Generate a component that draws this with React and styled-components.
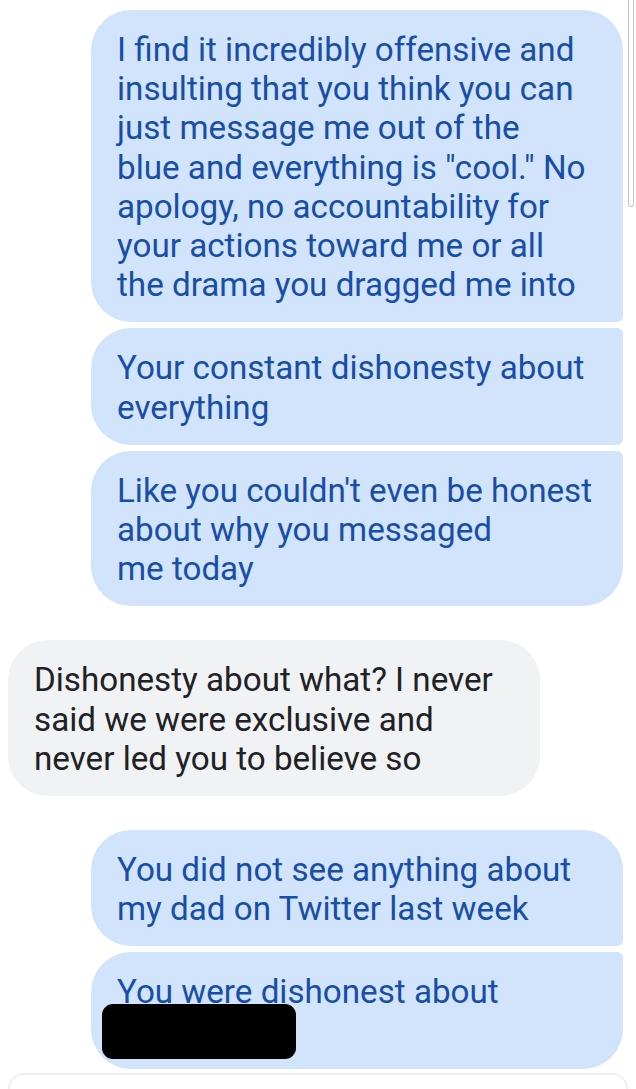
import styled, { createGlobalStyle } from "styled-components";

const GlobalStyle = createGlobalStyle`
  html, body {
    margin: 0;
    padding: 0;
    background: #ffffff;
  }
  body {
    font-family: Roboto, "Noto Sans", "Liberation Sans", sans-serif;
    -webkit-font-smoothing: antialiased;
  }
`;

const Thread = styled.div`
  position: relative;
  display: flex;
  flex-direction: column;
  padding: 10px 13px 0 8px;
  height: 1089px;
  overflow: hidden;
  box-sizing: border-box;
`;

const Group = styled.div`
  display: flex;
  flex-direction: column;
  align-items: ${(p) => (p.$mine ? "flex-end" : "flex-start")};
  gap: 6px;
  margin-bottom: 34px;
`;

const Bubble = styled.div`
  box-sizing: border-box;
  width: 532px;
  padding: 20px 16px 18px 26px;
  font-size: 33.2px;
  line-height: 39.2px;
  color: ${(p) => (p.$mine ? "#174ea6" : "#202124")};
  background: ${(p) => (p.$mine ? "#d2e3fc" : "#f0f2f3")};
  border-radius: ${(p) => p.$radius};
`;

const Line = styled.div`
  white-space: nowrap;
`;

const Redaction = styled.div`
  width: 194px;
  height: 55px;
  margin: -8px 0 -8px -15px;
  background: #000;
  border-radius: 11px;
`;

const Composer = styled.div`
  margin: -30px -5px 0 0;
  height: 60px;
  border: 2px solid #eef0f1;
  border-bottom: none;
  border-radius: 44px 44px 0 0;
  background: #fff;
`;

const ScrollThumb = styled.div`
  position: absolute;
  top: -10px;
  right: 2px;
  width: 4px;
  height: 216px;
  border: 1px solid #c4c4c4;
  border-top: none;
  border-radius: 0 0 4px 4px;
`;

const R = "40px";
const S = "6px";

const messages = [
  {
    mine: true,
    items: [
      {
        radius: `${R} ${R} ${S} ${R}`,
        lines: [
          "I find it incredibly offensive and",
          "insulting that you think you can",
          "just message me out of the",
          'blue and everything is "cool." No',
          "apology, no accountability for",
          "your actions toward me or all",
          "the drama you dragged me into",
        ],
      },
      {
        radius: `${R} ${S} ${S} ${R}`,
        lines: ["Your constant dishonesty about", "everything"],
      },
      {
        radius: `${R} ${S} ${R} ${R}`,
        lines: [
          "Like you couldn't even be honest",
          "about why you messaged",
          "me today",
        ],
      },
    ],
  },
  {
    mine: false,
    items: [
      {
        radius: R,
        lines: [
          "Dishonesty about what? I never",
          "said we were exclusive and",
          "never led you to believe so",
        ],
      },
    ],
  },
  {
    mine: true,
    items: [
      {
        radius: `${R} ${R} ${S} ${R}`,
        lines: ["You did not see anything about", "my dad on Twitter last week"],
      },
      {
        radius: `${R} ${S} ${R} ${R}`,
        lines: ["You were dishonest about"],
        redacted: true,
      },
    ],
  },
];

function App() {
  return (
    <>
      <GlobalStyle />
      <Thread>
        <ScrollThumb />
        {messages.map((group, gi) => (
          <Group key={gi} $mine={group.mine}>
            {group.items.map((msg, mi) => (
              <Bubble key={mi} $mine={group.mine} $radius={msg.radius}>
                {msg.lines.map((l, li) => (
                  <Line key={li}>{l}</Line>
                ))}
                {msg.redacted && <Redaction />}
              </Bubble>
            ))}
          </Group>
        ))}
        <Composer />
      </Thread>
    </>
  );
}

export default App;
